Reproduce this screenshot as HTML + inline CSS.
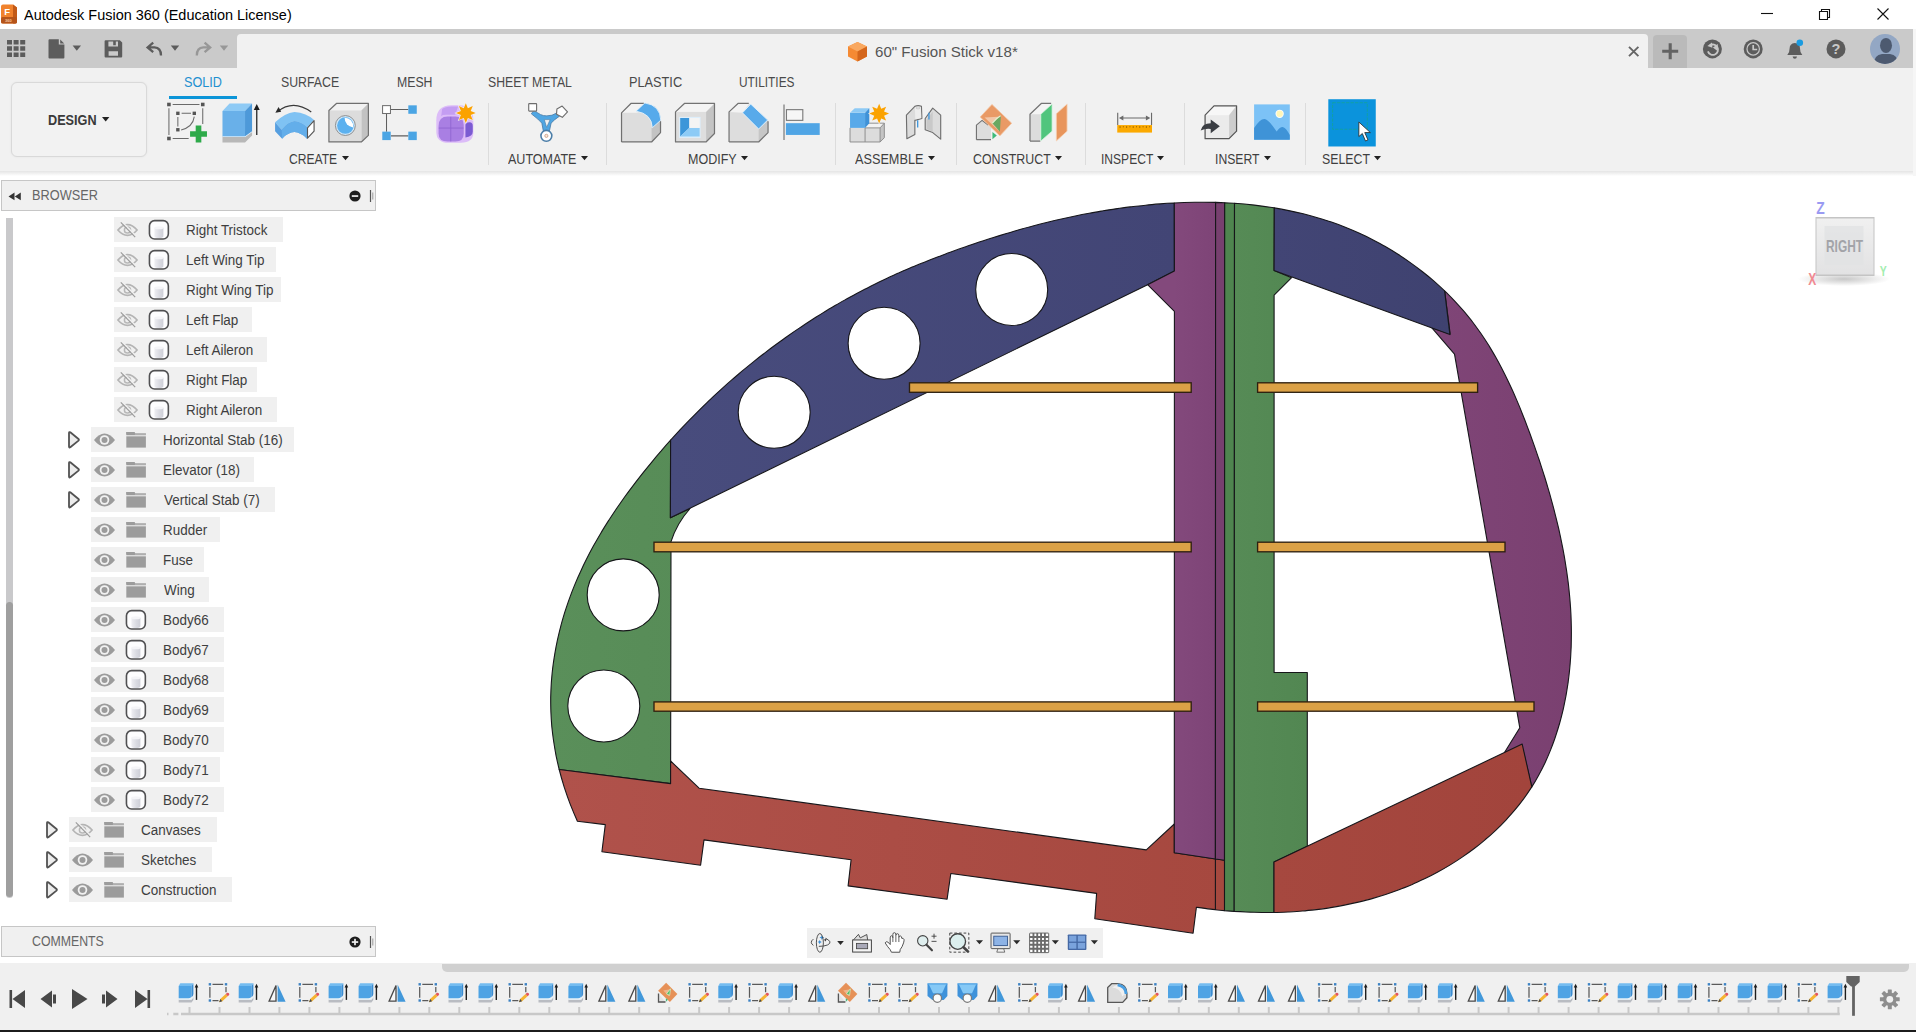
<!DOCTYPE html>
<html lang="en"><head><meta charset="utf-8"><title>Autodesk Fusion 360</title>
<style>
html,body{margin:0;padding:0}
body{width:1916px;height:1032px;position:relative;overflow:hidden;background:#fff;font-family:"Liberation Sans",sans-serif;color:#3c3c3c;font-size:12px}
.abs{position:absolute}
svg{display:block;overflow:visible}
#titlebar{position:absolute;left:0;top:0;width:1916px;height:29px;background:#fff}
#titlebar .t{position:absolute;left:23px;top:5px;font-size:15px;line-height:18px;color:#000;white-space:nowrap;transform-origin:0 50%}
#tabbar{position:absolute;left:0;top:29px;width:1916px;height:39.500px;background:#cacaca}
#doctab{position:absolute;left:237px;top:5px;width:1410.500px;height:35px;background:#f1f1f1;border-radius:4px 4px 0 0}
#toolbar{position:absolute;left:0;top:68px;width:1916px;height:103px;background:#f1f1f1}
#tbshadow{position:absolute;left:0;top:171px;width:1916px;height:5px;background:linear-gradient(#e4e4e4,#f4f4f4 60%,#fff)}
.tab{position:absolute;top:7px;font-size:12px;line-height:14px;color:#4a4a4a;white-space:nowrap}
.grp{position:absolute;top:84px;font-size:12px;line-height:14px;color:#3c3c3c;white-space:nowrap}
.grp:after{content:"";display:inline-block;margin-left:3px;border:3.5px solid transparent;border-top:4.5px solid #222;border-bottom:0;vertical-align:3px}
.sep{position:absolute;top:35px;width:1px;height:62px;background:#dcdcdc}
.ico{position:absolute}
#browserhdr,#comments{position:absolute;left:1px;width:373px;height:29px;background:#f0f0f0;border:1px solid #c6c6c6;box-sizing:content-box}
.hdrt{position:absolute;left:31px;top:8px;font-size:12.5px;line-height:14px;color:#5a5a5a}
.row{position:absolute;height:25px;background:#f0f0f0;white-space:nowrap}
.row .lbl{position:absolute;top:4px;font-size:13.5px;line-height:16px;color:#333}
.lb{position:absolute;white-space:nowrap;transform-origin:0 0}

</style></head>
<body>
<svg width="0" height="0" style="position:absolute"><defs>
<symbol id="iExp" overflow="visible"><path d="M2.300 2.200Q2.300 0.800 3.600 1.500L11.800 8.200Q12.600 9 11.800 9.800L3.600 16.500Q2.300 17.200 2.300 15.800Z" fill="#ececec" stroke="#525252" stroke-width="1.800" stroke-linejoin="round"/></symbol>
<symbol id="iEye" overflow="visible"><path d="M0.500 8Q5.500 1.500 11 1.500T21.500 8Q16.500 14.500 11 14.500T0.500 8Z" fill="#9b9b9b"/><circle cx="11" cy="8" r="4.800" fill="#f1f1f1"/><circle cx="11" cy="8" r="3" fill="#9b9b9b"/></symbol>
<symbol id="iEyeOff" overflow="visible"><path d="M1.400 8Q6 2.600 11 2.600T20.600 8Q16 13.400 11 13.400T1.400 8Z" fill="none" stroke="#b4b4b4" stroke-width="1.600"/><circle cx="11" cy="8" r="3.100" fill="none" stroke="#b8b8b8" stroke-width="1.500"/><path d="M5.500 -0.200L19.900 14.500" stroke="#f0f0f0" stroke-width="1.500" fill="none"/><path d="M4.300 0.400L18.700 15.100" stroke="#9c9c9c" stroke-width="1.200" fill="none"/></symbol>
<symbol id="iFolder" overflow="visible"><path d="M0.200 0H8.200L9.200 1.300H19.800V3.300H0.200Z" fill="#9c9c9c"/><path d="M0.200 0H8.400V2.300H0.200Z" fill="#9c9c9c"/><path d="M0.200 4.300H19.800V15.600H0.200Z" fill="#9c9c9c"/><path d="M8.800 2.100H19.800" stroke="#c4c4c4" stroke-width="0.800"/></symbol>
<symbol id="iBody" overflow="visible"><rect x="0.850" y="0.850" width="18.900" height="18.400" rx="5.200" fill="#fdfdfe" stroke="#505052" stroke-width="1.600"/><path d="M5.800 8v8.400q0 1.800 4.500 1.800t4.500-1.800V8z" fill="url(#gCyl)"/><ellipse cx="10.300" cy="8" rx="4.500" ry="1.500" fill="#f4f4f7"/></symbol>
<linearGradient id="gCyl" x1="0" x2="1"><stop offset="0" stop-color="#eeeef2"/><stop offset="0.600" stop-color="#d8d9e0"/><stop offset="1" stop-color="#cfd0d8"/></linearGradient>
<symbol id="iGear" overflow="visible"><g transform="translate(10,10)" fill="#8e8e8e"><circle r="6.800"/><g id="gt"><rect x="-2" y="-9.900" width="4" height="5" rx="0.500"/><rect x="-2" y="4.900" width="4" height="5" rx="0.500"/></g><use href="#gt" transform="rotate(45)"/><use href="#gt" transform="rotate(90)"/><use href="#gt" transform="rotate(135)"/><circle r="3.400" fill="#f0f0f0"/></g></symbol>
<!-- timeline icons 22x22 -->
<symbol id="tE" overflow="visible"><path d="M1.700 16.600H14.500L16.400 14.300V17L14.500 19.400H1.700Z" fill="#b9bcc2"/><path d="M1.700 15.200H14.500L16.400 12.800V14.500L14.500 16.800H1.700Z" fill="#e6f3fc"/><path d="M1.700 3.100L3.300 0.300H16.400L14.500 3.100Z" fill="#74bcf0"/><path d="M1.700 3.100H14.500V12.500Q14.500 15.200 11.500 15.200H1.700Z" fill="#4ea3e4"/><path d="M14.500 3.100L16.400 0.300V11Q16.400 13 14.500 14.200Z" fill="#3b8dd2"/><path d="M19.500 16.900V3" stroke="#1e1e1e" stroke-width="1.400" fill="none"/><path d="M19.500 0.800L21.300 4.600H17.700Z" fill="#1e1e1e"/></symbol>
<symbol id="tS" overflow="visible"><path d="M5.500 1.300H16.200M2.900 4V14.800M19 4V9.300M5.500 17.500H11.500" fill="none" stroke="#5a5a5a" stroke-width="1.250"/><g fill="#3b82c4"><rect x="1.700" y="0.100" width="2.400" height="2.400"/><rect x="17.800" y="0.100" width="2.400" height="2.400"/><rect x="1.700" y="16.300" width="2.400" height="2.400"/></g><path d="M12.200 19.300L13.300 16.100L18.700 11.100L20.700 13.200L15.300 18.300Z" fill="#f6b432"/><path d="M18.700 11.100L19.900 10Q21 9.300 21.900 10.300Q22.800 11.300 21.900 12.200L20.700 13.200Z" fill="#e2545e"/><path d="M12.200 19.300L13.300 16.100L15.300 18.300Z" fill="#4a4a4a"/></symbol>
<symbol id="tM" overflow="visible"><path d="M9.100 2.600V18.200H2.200Z" fill="#f8f8f8" stroke="#484848" stroke-width="1.300" stroke-linejoin="miter"/><path d="M10.700 1.600L18.700 18.800H10.700Z" fill="#4298da"/></symbol>
<symbol id="tP" overflow="visible"><path d="M1.800 10.500V19H8.800" fill="#e2e2e2" stroke="#555" stroke-width="1.300"/><path d="M9.400 -0.300L20.700 11L13.200 19L1.400 7.700Z" fill="#e58a4c" fill-opacity="0.930"/><path d="M6.500 7.500L13.500 6.200L12.500 13.500Z" fill="#f0b48c"/><path d="M9.800 10.800L13.800 5.800L13 12.300Z" fill="#58b86a" stroke="#d8f2c8" stroke-width="0.700"/><path d="M9.200 15.200L11.200 16.800L9.200 18.800Z" fill="#3dba7a"/></symbol>
<symbol id="tH" overflow="visible"><path d="M1 0.400H20.900V12.900L17.200 17.100H5.900L1 12.900Z" fill="#3f92da"/><path d="M2.200 1.100H19.800L15.500 10.300H6.600Z" fill="#86c9f6"/><path d="M1 0.400H20.900V1.600H1Z" fill="#58a8e6"/><circle cx="10.800" cy="15.200" r="4.200" fill="#fbfbfb" stroke="#7a7a7a" stroke-width="1.200"/></symbol>
<symbol id="tF" overflow="visible"><path d="M1.300 19.400V4.400L5.500 0.600H11.600Q20.500 1.500 20.500 10.500V14.700L16.300 19.400Z" fill="#dcdcdc" stroke="#585858" stroke-width="1.300" stroke-linejoin="round"/><path d="M5.600 4.600Q14 5 15.800 13.500L20 10Q19.500 1.600 11.600 1.200Z" fill="#f0f0f0"/><path d="M11.200 1.900Q19.300 3.200 19.600 11" fill="none" stroke="#4a9fe2" stroke-width="2.700"/></symbol>
</defs></svg>

<svg id="model" width="1916" height="1032" viewBox="0 0 1916 1032" style="position:absolute;left:0;top:0"><defs>
<linearGradient id="gGreenL" x1="0" x2="1" y1="0" y2="0"><stop offset="0" stop-color="#5a8f5a"/><stop offset="1" stop-color="#578c57"/></linearGradient>
<linearGradient id="gRedL" gradientUnits="userSpaceOnUse" x1="560" x2="1225" y1="0" y2="0"><stop offset="0" stop-color="#b0524b"/><stop offset="1" stop-color="#a6483f"/></linearGradient>
<linearGradient id="gRedR" gradientUnits="userSpaceOnUse" x1="1274" x2="1530" y1="0" y2="0"><stop offset="0" stop-color="#a6483f"/><stop offset="1" stop-color="#a2443c"/></linearGradient>
<linearGradient id="gBlueL" gradientUnits="userSpaceOnUse" x1="670" x2="1175" y1="0" y2="0"><stop offset="0" stop-color="#484c7d"/><stop offset="1" stop-color="#424575"/></linearGradient>
<linearGradient id="gBlueR" gradientUnits="userSpaceOnUse" x1="1274" x2="1450" y1="0" y2="0"><stop offset="0" stop-color="#424575"/><stop offset="1" stop-color="#3f4270"/></linearGradient>
<linearGradient id="gPurC" gradientUnits="userSpaceOnUse" x1="1174" x2="1215" y1="0" y2="0"><stop offset="0" stop-color="#83497c"/><stop offset="1" stop-color="#7e4477"/></linearGradient>
<linearGradient id="gPurR" gradientUnits="userSpaceOnUse" x1="1440" x2="1572" y1="0" y2="0"><stop offset="0" stop-color="#7f4577"/><stop offset="1" stop-color="#7a4070"/></linearGradient>
<linearGradient id="gGreenC" gradientUnits="userSpaceOnUse" x1="1234" x2="1307" y1="0" y2="0"><stop offset="0" stop-color="#568b56"/><stop offset="1" stop-color="#528752"/></linearGradient>
</defs>
<path d="M559.2 769.5C558.0 764.8 557.0 760.0 556.0 755.3C555.1 750.5 554.3 745.7 553.6 741.0C552.9 736.2 552.3 731.4 551.8 726.5C551.4 721.7 551.1 716.9 550.9 712.1C550.7 707.3 550.7 702.4 550.7 697.6C550.8 692.8 551.0 688.0 551.3 683.2C551.6 678.3 552.1 673.5 552.6 668.7C553.2 664.0 553.9 659.2 554.7 654.4C555.5 649.6 556.4 644.9 557.4 640.2C558.4 635.5 559.6 630.8 560.8 626.1C562.0 621.4 563.4 616.8 564.8 612.2C566.3 607.6 567.8 603.0 569.5 598.4C571.1 593.9 572.8 589.4 574.7 584.9C576.5 580.5 578.4 576.0 580.5 571.7C582.5 567.3 584.6 562.9 586.8 558.6C588.9 554.3 591.2 550.0 593.5 545.8C595.9 541.6 598.3 537.4 600.8 533.2C603.2 529.1 605.8 525.0 608.4 520.9C611.0 516.8 613.7 512.8 616.4 508.7C619.2 504.7 622.0 500.8 624.8 496.8C627.6 492.9 630.5 489.0 633.5 485.1C636.4 481.2 639.4 477.4 642.4 473.6C645.4 469.8 648.5 466.0 651.6 462.3C654.7 458.5 657.8 454.8 661.0 451.2C664.1 447.5 667.3 443.8 670.6 440.2L670.4 517.8L690.1 508.5Q677.0 523.0 671.0 541.7L670.6 783.6ZM587.2 594.9 a36.0 36.0 0 1 0 72.0 0a36.0 36.0 0 1 0 -72.0 0zM567.8 706.0 a36.0 36.0 0 1 0 72.0 0a36.0 36.0 0 1 0 -72.0 0z" fill="url(#gGreenL)" stroke="#16161a" stroke-width="1.1" stroke-linejoin="round" fill-rule="evenodd" />
<path d="M559.2 769.5L670.6 783.6L670.6 761.0L699.1 788.2L1146.3 849.9L1174.3 824.0L1174.3 852.8L1224.4 860.3L1224.5 910.6C1219.8 910.2 1215.1 909.7 1210.4 909.1C1205.7 908.6 1201.1 907.9 1196.4 907.2L1193.1 933.2L1094.8 918.8L1096.6 893.4L950.8 873.5L947.1 899.2L848.1 885.9L851.1 859.8L704.0 839.9L700.6 865.3L601.9 851.7L605.3 824.6L577.4 821.2C574.9 815.7 572.5 810.0 570.3 804.4C568.1 798.7 566.1 792.9 564.2 787.1C562.4 781.3 560.7 775.4 559.2 769.5Z" fill="url(#gRedL)" stroke="#16161a" stroke-width="1.1" stroke-linejoin="round" fill-rule="evenodd" />
<path d="M670.6 440.2C673.8 436.7 677.0 433.2 680.2 429.7C683.5 426.2 686.8 422.8 690.1 419.4C693.4 416.0 696.8 412.6 700.1 409.3C703.5 405.9 707.0 402.6 710.4 399.3C713.9 396.1 717.3 392.8 720.9 389.6C724.4 386.4 727.9 383.3 731.5 380.2C735.1 377.0 738.7 374.0 742.3 370.9C746.0 367.9 749.7 364.9 753.4 361.9C757.1 358.9 760.8 356.0 764.6 353.1C768.3 350.2 772.1 347.3 776.0 344.5C779.8 341.7 783.6 338.9 787.5 336.2C791.4 333.4 795.3 330.7 799.3 328.1C803.2 325.4 807.2 322.8 811.2 320.2C815.2 317.7 819.2 315.1 823.3 312.6C827.3 310.2 831.4 307.7 835.5 305.3C839.6 302.9 843.8 300.6 847.9 298.3C852.1 295.9 856.3 293.7 860.5 291.5C864.7 289.2 868.9 287.1 873.2 284.9C877.5 282.8 881.8 280.8 886.1 278.7C890.4 276.7 894.7 274.7 899.1 272.8C903.4 270.8 907.8 269.0 912.2 267.1C916.6 265.3 921.0 263.4 925.5 261.7C929.9 259.9 934.3 258.2 938.8 256.5C943.3 254.8 947.7 253.1 952.2 251.5C956.7 249.9 961.2 248.3 965.7 246.7C970.2 245.1 974.7 243.6 979.2 242.1C983.7 240.6 988.2 239.1 992.7 237.7C997.3 236.3 1001.8 234.9 1006.4 233.5C1010.9 232.1 1015.5 230.8 1020.0 229.5C1024.6 228.2 1029.2 227.0 1033.8 225.8C1038.3 224.6 1042.9 223.4 1047.5 222.3C1052.1 221.1 1056.7 220.0 1061.4 219.0C1066.0 218.0 1070.6 217.0 1075.3 216.0C1079.9 215.0 1084.6 214.1 1089.2 213.3C1093.9 212.4 1098.6 211.6 1103.2 210.8C1107.9 210.0 1112.6 209.3 1117.3 208.6C1122.0 207.9 1126.8 207.3 1131.5 206.7C1136.2 206.2 1141.0 205.6 1145.7 205.2C1150.5 204.7 1155.2 204.3 1160.0 203.9C1164.8 203.5 1169.5 203.2 1174.3 203.0L1174.4 270.9L1147.6 284.7L670.4 517.8ZM738.2 412.3 a36.0 36.0 0 1 0 72.0 0a36.0 36.0 0 1 0 -72.0 0zM848.1 343.3 a36.0 36.0 0 1 0 72.0 0a36.0 36.0 0 1 0 -72.0 0zM975.7 289.5 a36.0 36.0 0 1 0 72.0 0a36.0 36.0 0 1 0 -72.0 0z" fill="url(#gBlueL)" stroke="#16161a" stroke-width="1.1" stroke-linejoin="round" fill-rule="evenodd" />
<path d="M1174.3 203.0C1181.2 202.6 1188.1 202.4 1195.0 202.3C1201.8 202.2 1208.7 202.2 1215.6 202.4L1215.4 859.0L1174.3 852.8L1174.4 311.3L1147.6 284.7L1174.4 270.9Z" fill="url(#gPurC)" stroke="#16161a" stroke-width="1.1" stroke-linejoin="round" fill-rule="evenodd" />
<path d="M1215.6 202.4C1218.6 202.5 1221.7 202.6 1224.7 202.8L1224.5 860.3L1215.4 859.0Z" fill="#77406f" stroke="#16161a" stroke-width="1.1" stroke-linejoin="round" fill-rule="evenodd" />
<path d="M1215.4 859L1215.4 909.3" stroke="#16161a" stroke-width="1.1" fill="none"/>
<path d="M1216 860L1223.9 861.2L1223.9 910L1216 909.2z" fill="#a5493f"/>
<path d="M1224.7 202.8C1228.0 202.9 1231.2 203.1 1234.5 203.3L1234.2 911.4C1230.9 911.2 1227.7 910.9 1224.5 910.6Z" fill="#4f854f" stroke="#16161a" stroke-width="1.1" stroke-linejoin="round" fill-rule="evenodd" />
<path d="M1234.5 203.3C1241.2 203.8 1247.8 204.4 1254.5 205.1C1261.1 205.9 1267.7 206.8 1274.3 207.9L1274.1 270.4L1291.6 277.7L1274.1 295.2L1274.1 672.5L1307.3 672.5L1307.3 846.2L1274.0 862.0L1274.0 912.5C1267.3 912.6 1260.7 912.5 1254.1 912.3C1247.4 912.2 1240.8 911.8 1234.2 911.4Z" fill="url(#gGreenC)" stroke="#16161a" stroke-width="1.1" stroke-linejoin="round" fill-rule="evenodd" />
<path d="M1444.6 290.9C1448.0 294.1 1451.3 297.5 1454.5 300.8C1457.7 304.2 1460.8 307.7 1463.8 311.2C1466.8 314.8 1469.8 318.4 1472.6 322.0C1475.4 325.7 1478.1 329.5 1480.8 333.3C1483.4 337.1 1485.9 340.9 1488.4 344.8C1490.8 348.8 1493.2 352.7 1495.5 356.8C1497.8 360.8 1500.0 364.9 1502.1 369.0C1504.2 373.1 1506.3 377.3 1508.3 381.5C1510.3 385.7 1512.3 389.9 1514.2 394.2C1516.0 398.5 1517.9 402.8 1519.7 407.1C1521.4 411.5 1523.2 415.9 1524.9 420.3C1526.6 424.7 1528.2 429.1 1529.9 433.5C1531.5 437.9 1533.1 442.4 1534.7 446.9C1536.2 451.3 1537.8 455.8 1539.3 460.3C1540.8 464.8 1542.2 469.3 1543.7 473.8C1545.1 478.4 1546.5 482.9 1547.8 487.4C1549.2 492.0 1550.5 496.5 1551.7 501.1C1553.0 505.7 1554.2 510.3 1555.3 514.8C1556.5 519.4 1557.6 524.0 1558.7 528.6C1559.7 533.2 1560.7 537.8 1561.6 542.4C1562.6 547.1 1563.5 551.7 1564.3 556.3C1565.1 560.9 1565.8 565.6 1566.5 570.2C1567.2 574.8 1567.8 579.5 1568.4 584.1C1568.9 588.8 1569.4 593.4 1569.8 598.1C1570.2 602.7 1570.6 607.4 1570.8 612.0C1571.1 616.7 1571.2 621.3 1571.3 626.0C1571.4 630.7 1571.4 635.3 1571.3 640.0C1571.3 644.6 1571.1 649.3 1570.8 653.9C1570.6 658.6 1570.2 663.2 1569.8 667.8C1569.4 672.5 1568.8 677.1 1568.2 681.8C1567.5 686.4 1566.8 691.0 1566.0 695.6C1565.1 700.2 1564.2 704.8 1563.2 709.4C1562.1 714.0 1561.0 718.5 1559.7 723.0C1558.4 727.5 1557.0 732.0 1555.5 736.5C1554.1 740.9 1552.4 745.3 1550.7 749.6C1549.0 754.0 1547.1 758.2 1545.2 762.5C1543.2 766.7 1541.1 770.8 1538.8 774.9C1536.6 779.0 1534.3 783.0 1531.8 786.9L1523.0 750.0L1504.5 752.5L1519.8 727.8L1454.5 354.1L1431.9 327.8L1450.2 334.0Z" fill="url(#gPurR)" stroke="#16161a" stroke-width="1.1" stroke-linejoin="round" fill-rule="evenodd" />
<path d="M1274.3 207.9C1279.2 208.7 1284.0 209.6 1288.8 210.6C1293.6 211.5 1298.4 212.6 1303.2 213.8C1307.9 215.0 1312.7 216.3 1317.4 217.7C1322.1 219.1 1326.8 220.5 1331.4 222.1C1336.1 223.7 1340.7 225.4 1345.3 227.3C1349.8 229.1 1354.4 231.0 1358.9 233.1C1363.4 235.1 1367.8 237.2 1372.2 239.5C1376.6 241.8 1381.0 244.1 1385.3 246.6C1389.6 249.1 1393.8 251.6 1398.0 254.3C1402.2 257.0 1406.3 259.7 1410.3 262.6C1414.4 265.5 1418.3 268.4 1422.2 271.5C1426.1 274.5 1430.0 277.7 1433.7 280.9C1437.4 284.2 1441.1 287.5 1444.6 290.9L1449.9 334.6L1274.1 270.4Z" fill="url(#gBlueR)" stroke="#16161a" stroke-width="1.1" stroke-linejoin="round" fill-rule="evenodd" />
<path d="M1274.0 862.0L1522.2 744.1L1531.8 786.9C1529.2 790.9 1526.6 794.8 1523.8 798.6C1521.0 802.4 1518.1 806.1 1515.1 809.7C1512.1 813.3 1508.9 816.8 1505.7 820.3C1502.5 823.7 1499.1 827.1 1495.7 830.3C1492.2 833.6 1488.7 836.8 1485.0 839.8C1481.4 842.9 1477.7 845.9 1473.9 848.8C1470.1 851.7 1466.2 854.4 1462.2 857.1C1458.3 859.8 1454.3 862.4 1450.2 864.9C1446.1 867.4 1442.0 869.8 1437.8 872.0C1433.6 874.3 1429.4 876.5 1425.1 878.6C1420.8 880.6 1416.5 882.6 1412.2 884.5C1407.8 886.3 1403.4 888.1 1399.0 889.8C1394.6 891.4 1390.1 893.0 1385.6 894.5C1381.2 895.9 1376.6 897.3 1372.1 898.6C1367.6 899.9 1363.0 901.0 1358.4 902.1C1353.8 903.2 1349.2 904.2 1344.5 905.1C1339.9 906.1 1335.2 906.9 1330.6 907.6C1325.9 908.4 1321.2 909.0 1316.5 909.6C1311.8 910.1 1307.1 910.6 1302.4 911.0C1297.7 911.4 1292.9 911.7 1288.2 912.0C1283.5 912.2 1278.7 912.4 1274.0 912.5Z" fill="url(#gRedR)" stroke="#16161a" stroke-width="1.1" stroke-linejoin="round" fill-rule="evenodd" />
<rect x="909.5" y="382.8" width="281.7" height="9.5" fill="#dba146" stroke="#2e2010" stroke-width="1.35"/>
<rect x="654.0" y="542.2" width="537.2" height="9.6" fill="#dba146" stroke="#2e2010" stroke-width="1.35"/>
<rect x="654.0" y="701.9" width="537.2" height="9.3" fill="#dba146" stroke="#2e2010" stroke-width="1.35"/>
<rect x="1257.6" y="382.8" width="220.0" height="9.5" fill="#dba146" stroke="#2e2010" stroke-width="1.35"/>
<rect x="1257.6" y="542.2" width="247.4" height="9.6" fill="#dba146" stroke="#2e2010" stroke-width="1.35"/>
<rect x="1257.6" y="701.9" width="276.4" height="9.3" fill="#dba146" stroke="#2e2010" stroke-width="1.35"/></svg>
<div id="titlebar">
<svg class="abs" style="left:0.800px;top:4px" width="16" height="20" viewBox="0 0 16 20"><path d="M0 2.5Q0 0.5 2 0.5H12L16 3.5V17.5Q16 19.5 14 19.5H2Q0 19.5 0 17.5Z" fill="#f0822d"/><path d="M12 0.5L16 3.5V17.5Q16 19.5 14 19.5H12Z" fill="#c25a18"/><rect x="0" y="13" width="16" height="6.5" rx="1.5" fill="#b5541a"/><text x="3.3" y="10.5" font-family="Liberation Sans,sans-serif" font-weight="bold" font-size="9.5" fill="#fff">F</text><text x="4" y="18" font-family="Liberation Sans,sans-serif" font-weight="bold" font-size="4" fill="#f7c9a0">360</text></svg>
<!--TITLE-->
<svg class="abs" style="left:1740px;top:0" width="176" height="29" viewBox="0 0 176 29"><g stroke="#111" stroke-width="1.1" fill="none"><path d="M21 13.5H33"/><path d="M79.5 11.5h8v8h-8zM81.5 11.5v-2h8v8h-2"/><path d="M137.5 8.5l11 11M148.5 8.5l-11 11"/></g></svg>
</div>
<div id="tabbar">
<div id="doctab"></div>
<div class="abs" style="left:1652.800px;top:5.500px;width:34px;height:34px;background:#bababa;border-radius:4px 4px 0 0"></div>
<svg class="abs" style="left:0;top:0" width="1916" height="39" viewBox="0 29 1916 39">
<g fill="#5c5c5c">
<path d="M7 40h5v4.6h-5zM13.6 40h5v4.6h-5zM20.2 40h5v4.6h-5zM7 46.2h5v4.6h-5zM13.6 46.2h5v4.6h-5zM20.2 46.2h5v4.6h-5zM7 52.4h5v4.6h-5zM13.6 52.4h5v4.6h-5zM20.2 52.4h5v4.6h-5z"/>
<path d="M48.5 40.2q0-1 1-1h9.3v5.4h5.6v13q0 1-1 1h-13.9q-1 0-1-1zM60.2 39.4l4 4h-4z"/>
<path d="M72.6 45.6h8.4l-4.2 5.2z"/>
<path d="M104.6 41.2q0-1 1-1h14.2l2.4 2.4v13.8q0 1-1 1h-15.6q-1 0-1-1zM108.4 41.6v5h9.6v-5h-2.2v3.6h-2.6v-3.6zM108.6 55.8h9.4v-4.6h-9.4z" fill-rule="evenodd"/>
<path d="M170.8 45.6h8.4l-4.2 5.2z"/>
</g>
<path d="M153.2 42.6l-5.6 4.8 5.6 4.8M148 47.4h6.5q6.5 0.4 6.5 8" fill="none" stroke="#5c5c5c" stroke-width="2.3"/>
<path d="M204.6 42.6l5.6 4.8-5.6 4.8M209.8 47.4h-6.5q-6.5 0.4-6.5 8" fill="none" stroke="#979797" stroke-width="2.3"/>
<path d="M219.8 45.6h8.4l-4.2 5.2z" fill="#979797"/>
<!-- doc icon cube -->
<g transform="translate(848,42)"><path d="M9.5 0L19 4.5V14.5L9.5 19.5L0 14.5V4.5Z" fill="#f58a33"/><path d="M9.5 0L19 4.5L9.5 9.5L0 4.5Z" fill="#f9a860"/><path d="M9.5 9.5L19 4.5V14.5L9.5 19.5Z" fill="#d4661c"/></g>
<path d="M1629 46.800l9.400 9.400M1638.400 46.800l-9.400 9.400" stroke="#666" stroke-width="1.900" fill="none"/>
<path d="M1670.200 43.200v16M1662.200 51.200h16" stroke="#636363" stroke-width="3.100" fill="none"/>
<!-- ext -->
<g transform="translate(1712.400,48.900)"><circle r="9.5" fill="#5c5c5c"/><path d="M-4.5 2.5a5.2 5.2 0 1 0 2-6" fill="none" stroke="#c8c8c8" stroke-width="1.8"/><path d="M-0.5 -6.5l-4.5 3.5 5 1.8z" fill="#c8c8c8"/><path d="M0.5 -1.5l5-3.5-0.5 7z" fill="#c8c8c8"/></g>
<!-- clock -->
<g transform="translate(1753.200,48.900)"><circle r="9.5" fill="#5c5c5c"/><circle r="6.8" fill="#c8c8c8"/><circle r="5.6" fill="#5c5c5c"/><path d="M0 -3.8V0.6H4" fill="none" stroke="#c8c8c8" stroke-width="1.7"/></g>
<!-- bell -->
<g transform="translate(1794.800,49.600)"><path d="M-7.5 5.5q2.3-2 2.3-6.5q0-5 5.2-5.6q5.2 0.6 5.2 5.6q0 4.500 2.3 6.5z" fill="#5c5c5c"/><path d="M-2.2 7h4.4q-0.4 2.200-2.200 2.200t-2.200-2.200z" fill="#5c5c5c"/><circle cx="5" cy="-6.800" r="3.300" fill="#1a9be0"/></g>
<!-- help -->
<g transform="translate(1836,48.900)"><circle r="9.5" fill="#5c5c5c"/><text x="0" y="5.200" text-anchor="middle" font-family="Liberation Sans,sans-serif" font-weight="bold" font-size="14.500" fill="#c8c8c8">?</text></g>
<!-- avatar -->
<g transform="translate(1885,48.900)"><clipPath id="avc"><circle r="15"/></clipPath><circle r="15" fill="#93a7c4"/><g clip-path="url(#avc)"><ellipse cx="1" cy="-3.5" rx="6" ry="7.5" fill="#4d5a70"/><path d="M-11 15q0-9 8-10h8q8 1 8 10z" fill="#4d5a70"/></g></g>
</svg>
<!--DOCTITLE-->
</div>
<div id="toolbar">
<div class="abs" style="left:169px;top:28px;width:68px;height:3px;background:#0c95d8"></div>
<div class="abs" style="left:11.300px;top:14.300px;width:133.300px;height:73.200px;border:1px solid #d9d9d9;border-radius:6px;background:#f2f2f2;box-shadow:0 0 2px #e2e2e2"></div>
<div class="sep" style="left:488px"></div><div class="sep" style="left:606px"></div><div class="sep" style="left:835px"></div><div class="sep" style="left:956px"></div><div class="sep" style="left:1085px"></div><div class="sep" style="left:1184px"></div><div class="sep" style="left:1305px"></div>
<!--TBLABELS-->
<svg class="abs" style="left:0;top:0" width="1916" height="108" viewBox="0 68 1916 108">
<defs>
<path id="star8" d="M0 -105L22 -52L74 -74L52 -22L105 0L52 22L74 74L22 52L0 105L-22 52L-74 74L-52 22L-105 0L-52 -22L-74 -74L-22 -52Z"/>
</defs>
<!-- Z1 origin 160,95 -->
<g transform="translate(160,95) scale(0.09395)">
 <!-- sketch -->
 <g fill="none" stroke="#6a6a6a" stroke-width="11"><path d="M135 100H420M95 140V425M455 140V310M135 462H305"/><path d="M230 195H330M190 235V335"/><path d="M365 230Q350 340 225 372"/></g>
 <g fill="#555"><rect x="76" y="82" width="38" height="38"/><rect x="436" y="82" width="38" height="38"/><rect x="76" y="444" width="38" height="38"/><rect x="172" y="177" width="36" height="36"/><rect x="347" y="177" width="36" height="36"/><rect x="172" y="352" width="36" height="36"/></g>
 <path d="M380 325h60v60h60v60h-60v60h-60v-60h-60v-60h60z" fill="#2eaa4a"/>
 <!-- extrude -->
 <path d="M665 440H905L980 385V430L905 505H665Z" fill="#b8b8b8"/>
 <path d="M665 440H905L980 385" fill="none" stroke="#e8f4fc" stroke-width="16"/>
 <path d="M665 170H905V440H665Z" fill="#69b0e9"/>
 <path d="M665 170L740 90H980L905 170Z" fill="#8ecaf5"/>
 <path d="M905 170L980 90V385L905 440Z" fill="#4d99d9"/>
 <path d="M1030 425V130" stroke="#1c1c1c" stroke-width="13" fill="none"/><path d="M1030 95L1062 160H998Z" fill="#1c1c1c"/>
 <!-- revolve -->
 <path d="M1250 178Q1420 42 1610 182" fill="none" stroke="#3a3a3a" stroke-width="13"/><path d="M1228 188L1262 128L1290 178Z" fill="#2a2a2a"/>
 <path d="M1225 290Q1330 190 1430 180Q1560 190 1640 265L1565 345Q1500 285 1430 280Q1360 290 1295 370Z" fill="#7fc2f3"/>
 <path d="M1225 290L1295 370Q1360 290 1430 280Q1500 285 1565 345V465Q1500 400 1430 395Q1360 400 1300 465L1225 385Z" fill="#569fe0"/>
 <path d="M1295 370Q1360 290 1430 280Q1500 285 1565 345V465Q1500 400 1430 395Q1360 400 1300 465Z" fill="#63aeea"/>
 <path d="M1570 350L1640 272V385L1570 460Z" fill="#fff" stroke="#555" stroke-width="12" stroke-linejoin="round"/>
</g>
<!-- Z2 origin 320,95 -->
<g transform="translate(320,95) scale(0.09395)">
 <!-- hole -->
 <path d="M95 165L175 90H515L440 165Z" fill="#f2f2f2"/><path d="M440 165L515 90V430L440 500Z" fill="#c2c2c2"/><path d="M95 165H440V500H95Z" fill="#dcdcdc"/>
 <path d="M95 165L175 90H515V430L440 500H95Z" fill="none" stroke="#707070" stroke-width="13" stroke-linejoin="round"/>
 <circle cx="270" cy="325" r="106" fill="#cfe6f7" stroke="#8a8a8a" stroke-width="10"/><circle cx="270" cy="325" r="88" fill="#5cb1ef"/><path d="M262 243A88 88 0 0 1 352 345A100 100 0 0 1 262 243Z" fill="#fff"/>
 <!-- pattern -->
 <g fill="none" stroke="#5f5f5f" stroke-width="11"><path d="M755 155H940M708 200V390M755 435H940"/></g>
 <rect x="666" y="113" width="84" height="84" fill="#fff" stroke="#707070" stroke-width="11"/>
 <g fill="#4ba5e4"><rect x="940" y="110" width="90" height="90"/><rect x="663" y="390" width="90" height="90"/><rect x="940" y="390" width="90" height="90"/></g>
 <!-- form -->
 <path d="M1238 270Q1238 108 1400 108H1480Q1632 108 1632 270V400Q1632 508 1500 508H1370Q1238 508 1238 390Z" fill="#dcbcf8"/>
 <path d="M1262 330Q1262 228 1360 228H1440Q1530 228 1530 320V410Q1530 496 1440 496H1360Q1262 496 1262 410Z" fill="#a97fe3"/>
 <path d="M1548 300Q1626 270 1626 330V390Q1626 440 1548 452Z" fill="#7b5bd2"/>
 <path d="M1300 150Q1330 125 1400 122H1470L1440 210H1340Q1300 210 1290 225Z" fill="#c49df2"/>
 <path d="M1392 232V494M1264 352H1528" stroke="#8d64cf" stroke-width="9" fill="none"/>
 <g transform="translate(1552,192)"><use href="#star8" fill="#f4f0ec" transform="scale(1.16)"/><use href="#star8" fill="#fba200"/></g>
</g>
<!-- Z3 origin 490,95 -->
<g transform="translate(490,95) scale(0.09395)">
 <!-- automate -->
 <path d="M470 160Q540 225 600 222Q660 225 715 190L740 225Q680 265 650 300L632 385H568L552 300Q520 260 440 200Z" fill="#4fa6e3" stroke="#4c7ea8" stroke-width="9" stroke-linejoin="round"/>
 <path d="M578 262H640L603 345Z" fill="#f1f1f1" stroke="#4c7ea8" stroke-width="7" stroke-linejoin="round"/>
 <rect x="412" y="92" width="84" height="80" rx="6" fill="#fff" stroke="#6e6e6e" stroke-width="12"/>
 <path d="M768 118L825 180L770 238L708 205L712 150Z" fill="#fff" stroke="#6e6e6e" stroke-width="12" stroke-linejoin="round"/>
 <circle cx="600" cy="435" r="58" fill="#fff" stroke="#4c7ea8" stroke-width="17"/><circle cx="600" cy="435" r="17" fill="#f6e6dc" stroke="#c08a6a" stroke-width="7"/>
 <!-- fillet -->
 <path d="M1400 190L1500 90H1650Q1815 100 1815 265V400L1720 500H1400Z" fill="#dddddd"/>
 <path d="M1400 190L1500 90H1650L1560 172Q1600 178 1560 190Z" fill="#f3f3f3"/>
 <path d="M1720 350L1815 270V400L1720 500Z" fill="#c3c3c3"/>
 <path d="M1400 500V190L1500 90H1640M1815 280V400L1720 500H1400" fill="none" stroke="#707070" stroke-width="13" stroke-linejoin="round"/>
 <path d="M1555 172L1648 84Q1812 110 1818 268L1728 348Q1722 200 1555 172Z" fill="#56aaeb" stroke="#e4f2fc" stroke-width="9" stroke-linejoin="round"/>
</g>
<!-- Z4 origin 660,95 -->
<g transform="translate(660,95) scale(0.09395)">
 <!-- shell -->
 <path d="M165 180L260 90H580L490 180Z" fill="#f4f4f4"/><path d="M490 180L580 90V410L490 500Z" fill="#c4c4c4"/><path d="M165 180H490V500H165Z" fill="#dedede"/>
 <path d="M203 233H432V457H203Z" fill="#ddeefb"/>
 <path d="M310 245H422V350H310Z" fill="#f4f4f4"/>
 <path d="M215 245H310V350L215 442Z" fill="#3c96d9"/>
 <path d="M215 442L310 350H422V442Z" fill="#8dcbf6"/>
 <path d="M165 180L260 90H580V410L490 500H165Z" fill="none" stroke="#737373" stroke-width="13" stroke-linejoin="round"/>
 <!-- chamfer -->
 <path d="M735 180L830 90H950L1150 265V400L1050 500H735Z" fill="#dddddd"/>
 <path d="M735 180L830 90H950L880 190Z" fill="#f3f3f3"/>
 <path d="M1050 360L1150 275V400L1050 500Z" fill="#c6c6c6"/>
 <path d="M1150 280V400L1050 500H735" fill="none" stroke="#737373" stroke-width="13" stroke-linejoin="round"/>
 <path d="M735 500V180L830 90H945" fill="none" stroke="#737373" stroke-width="13" stroke-linejoin="round"/>
 <path d="M878 190L965 96L1146 266L1050 362Z" fill="#58aaea" stroke="#dff0fc" stroke-width="10" stroke-linejoin="round"/>
 <!-- align -->
 <path d="M1320 100V480" stroke="#7a7a7a" stroke-width="13" fill="none"/>
 <rect x="1346" y="156" width="174" height="114" fill="#f6f6f6" stroke="#7a7a7a" stroke-width="12"/>
 <rect x="1340" y="300" width="360" height="125" fill="#50a5e5"/>
</g>
<!-- Z5 origin 835,95 -->
<g transform="translate(835,95) scale(0.09395)">
 <!-- new component -->
 <path d="M160 350H480V500H160Z" fill="#dcdcdc"/><path d="M320 350L365 300H525L480 350Z" fill="#f2f2f2"/><path d="M480 350L525 300V455L480 500Z" fill="#c4c4c4"/>
 <path d="M160 350V500H480L525 455V300H365M320 350V500M320 350H480L525 300M480 350V500" fill="none" stroke="#8a8a8a" stroke-width="10" stroke-linejoin="round"/>
 <path d="M160 190H320V350H160Z" fill="#58a9e9"/><path d="M160 190L210 140H365L320 190Z" fill="#8ecaf5"/><path d="M320 190L365 140V300L320 350Z" fill="#3e92d8"/>
 <g transform="translate(470,198)"><use href="#star8" fill="#f4f0ec" transform="scale(1.14)"/><use href="#star8" fill="#fba200"/></g>
 <!-- joint -->
 <path d="M760 215L850 120Q885 105 920 120L925 250L850 270V420L765 465Z" fill="#dcdcdc" stroke="#6e6e6e" stroke-width="12" stroke-linejoin="round"/>
 <path d="M850 130Q885 115 915 128L918 245L855 262Z" fill="#ededed"/><ellipse cx="884" cy="138" rx="22" ry="9" fill="#fff" stroke="#999" stroke-width="5"/>
 <path d="M960 250L1040 140L1125 215V470L1040 400L960 370Z" fill="#dcdcdc" stroke="#6e6e6e" stroke-width="12" stroke-linejoin="round"/>
 <path d="M975 262L1040 175V390L975 362Z" fill="#c9c9c9"/>
 <path d="M880 270V345M1000 190V262" stroke="#3f97dc" stroke-width="14" fill="none"/>
</g>
<!-- Z6 origin 960,95 -->
<g transform="translate(960,95) scale(0.09395)">
 <!-- plane at angle -->
 <path d="M175 475V320L235 270L330 345V475Z" fill="#dddddd"/><path d="M175 475V320L235 270L300 320M175 475H330" fill="none" stroke="#737373" stroke-width="12" stroke-linejoin="round"/>
 <path d="M345 395L392 432L345 472Z" fill="#3dba7a"/>
 <path d="M340 100L550 300L425 435L215 235Z" fill="#e8935a" fill-opacity="0.92" stroke="#f3c4a0" stroke-width="8" stroke-linejoin="round"/>
 <path d="M262 240L410 232L418 385Z" fill="#f3c7a8"/>
 <path d="M345 300L435 220L425 392Z" fill="#6aa862"/>
 <path d="M345 300Q380 250 432 222" fill="none" stroke="#dff3d0" stroke-width="12"/>
 <!-- midplane -->
 <path d="M745 205L865 90H975L855 205Z" fill="#f4f4f4"/><path d="M745 205H858V490H745Z" fill="#dcdcdc"/>
 <path d="M745 490V205L865 90H970M745 490H855" fill="none" stroke="#737373" stroke-width="13" stroke-linejoin="round"/>
 <path d="M860 205L980 95V385L860 490Z" fill="#50c57d" stroke="#d8f5e2" stroke-width="8" stroke-linejoin="round"/>
 <path d="M1025 200L1140 95V385L1025 490Z" fill="#e8955c" stroke="#f7d5bc" stroke-width="8" stroke-linejoin="round"/>
</g>
<!-- Z7 origin 1090,95 -->
<g transform="translate(1090,95) scale(0.09395)">
 <path d="M295 190V320M655 190V320M330 245H620" fill="none" stroke="#6a6a6a" stroke-width="12"/>
 <path d="M308 245L355 218V272ZM642 245L595 218V272Z" fill="#6a6a6a"/>
 <rect x="290" y="320" width="370" height="80" fill="#fba900"/>
 <path d="M320 332v18M355 332v12M390 332v18M425 332v12M460 332v18M495 332v12M530 332v18M565 332v12M600 332v18M635 332v12" stroke="#8a5a00" stroke-width="9" fill="none"/>
 <!-- insert derive -->
 <path d="M1225 215L1320 115H1560L1480 215Z" fill="#f7f7f7"/><path d="M1480 215L1560 115V385L1480 465Z" fill="#cdcdcd"/><path d="M1225 215H1480V465H1225Z" fill="#ebebeb"/>
 <path d="M1225 215L1320 115H1560V385L1480 465H1225Z" fill="none" stroke="#555" stroke-width="13" stroke-linejoin="round"/>
 <path d="M1178 378Q1195 300 1285 300V262L1382 332L1285 408V362Q1225 355 1178 378Z" fill="#3a3d43"/>
</g>
<!-- Z8 origin 1240,95 -->
<g transform="translate(1240,95) scale(0.09395)">
 <rect x="150" y="100" width="380" height="375" fill="#7cc2f6"/>
 <path d="M150 352Q215 250 262 255Q305 260 390 388Q430 335 460 342Q490 350 530 425V475H150Z" fill="#3f93d7"/>
 <circle cx="422" cy="200" r="44" fill="#fff"/><circle cx="422" cy="200" r="34" fill="#fff6b8"/>
 <rect x="940" y="45" width="505" height="503" fill="#0b93dc"/>
 <rect x="985" y="82" width="370" height="283" fill="none" stroke="#14a39a" stroke-width="9" stroke-dasharray="34 14"/>
 <path d="M1265 288V442L1302 410L1336 490L1362 478L1328 400H1388Z" fill="#fff" stroke="#2a2a2a" stroke-width="9" stroke-linejoin="round"/>
</g>
</svg>

</div>
<div id="tbshadow"></div>

<div id="browserhdr" style="top:180px"><svg class="abs" style="left:6px;top:10.500px" width="14" height="9" viewBox="0 0 14 9"><path d="M6.500 0.600V8.200L0.500 4.400zM12.800 0.600V8.200L6.800 4.400z" fill="#333"/></svg><svg class="abs" style="left:346px;top:8px" width="30" height="14" viewBox="0 0 30 14"><circle cx="7" cy="7" r="5.600" fill="#1e1e1e"/><rect x="3.800" y="6.200" width="6.400" height="1.700" fill="#f0f0f0"/><path d="M22.500 1V13" stroke="#555" stroke-width="1.200"/><path d="M24.800 3.500V10.500" stroke="#999" stroke-width="1"/></svg></div>
<div class="abs" style="left:6.100px;top:217.600px;width:7.400px;height:680px;background:#c9c9cb;border-radius:0 0 3.700px 3.700px"></div><div class="abs" style="left:6.100px;top:602.400px;width:7.400px;height:294.600px;background:#9f9f9f;border-radius:3.700px"></div>
<div class="row" style="left:113.5px;top:217.3px;width:169.0px"><svg class="abs" style="left:0;top:0" width="70" height="25" viewBox="0 0 70 25"><use href="#iEyeOff" x="2.500" y="5"/><use href="#iBody" x="34.6" y="2.8"/></svg></div><div class="lb" style="left:185.60px;top:221.07px;font-size:13.95px;line-height:18px;color:#3e3e3e;transform:scaleX(0.9650);">Right Tristock</div>
<div class="row" style="left:113.5px;top:247.3px;width:162.9px"><svg class="abs" style="left:0;top:0" width="70" height="25" viewBox="0 0 70 25"><use href="#iEyeOff" x="2.500" y="5"/><use href="#iBody" x="34.6" y="2.8"/></svg></div><div class="lb" style="left:185.60px;top:251.07px;font-size:13.95px;line-height:18px;color:#3e3e3e;transform:scaleX(0.9650);">Left Wing Tip</div>
<div class="row" style="left:113.5px;top:277.3px;width:167.9px"><svg class="abs" style="left:0;top:0" width="70" height="25" viewBox="0 0 70 25"><use href="#iEyeOff" x="2.500" y="5"/><use href="#iBody" x="34.6" y="2.8"/></svg></div><div class="lb" style="left:185.60px;top:281.07px;font-size:13.95px;line-height:18px;color:#3e3e3e;transform:scaleX(0.9650);">Right Wing Tip</div>
<div class="row" style="left:113.5px;top:307.3px;width:138.2px"><svg class="abs" style="left:0;top:0" width="70" height="25" viewBox="0 0 70 25"><use href="#iEyeOff" x="2.500" y="5"/><use href="#iBody" x="34.6" y="2.8"/></svg></div><div class="lb" style="left:185.60px;top:311.07px;font-size:13.95px;line-height:18px;color:#3e3e3e;transform:scaleX(0.9650);">Left Flap</div>
<div class="row" style="left:113.5px;top:337.3px;width:153.1px"><svg class="abs" style="left:0;top:0" width="70" height="25" viewBox="0 0 70 25"><use href="#iEyeOff" x="2.500" y="5"/><use href="#iBody" x="34.6" y="2.8"/></svg></div><div class="lb" style="left:185.60px;top:341.07px;font-size:13.95px;line-height:18px;color:#3e3e3e;transform:scaleX(0.9650);">Left Aileron</div>
<div class="row" style="left:113.5px;top:367.3px;width:143.5px"><svg class="abs" style="left:0;top:0" width="70" height="25" viewBox="0 0 70 25"><use href="#iEyeOff" x="2.500" y="5"/><use href="#iBody" x="34.6" y="2.8"/></svg></div><div class="lb" style="left:185.60px;top:371.07px;font-size:13.95px;line-height:18px;color:#3e3e3e;transform:scaleX(0.9650);">Right Flap</div>
<div class="row" style="left:113.5px;top:397.3px;width:163.2px"><svg class="abs" style="left:0;top:0" width="70" height="25" viewBox="0 0 70 25"><use href="#iEyeOff" x="2.500" y="5"/><use href="#iBody" x="34.6" y="2.8"/></svg></div><div class="lb" style="left:185.60px;top:401.07px;font-size:13.95px;line-height:18px;color:#3e3e3e;transform:scaleX(0.9650);">Right Aileron</div>
<div class="row" style="left:91.0px;top:427.3px;width:203.4px"><svg class="abs" style="left:0;top:0" width="70" height="25" viewBox="0 0 70 25"><use href="#iExp" x="-24.300" y="3.800"/><use href="#iEye" x="2.500" y="5"/><use href="#iFolder" x="35.1" y="5.0"/></svg></div><div class="lb" style="left:163.10px;top:431.07px;font-size:13.95px;line-height:18px;color:#3e3e3e;transform:scaleX(0.9650);">Horizontal Stab (16)</div>
<div class="row" style="left:91.0px;top:457.3px;width:163.4px"><svg class="abs" style="left:0;top:0" width="70" height="25" viewBox="0 0 70 25"><use href="#iExp" x="-24.300" y="3.800"/><use href="#iEye" x="2.500" y="5"/><use href="#iFolder" x="35.1" y="5.0"/></svg></div><div class="lb" style="left:163.10px;top:461.07px;font-size:13.95px;line-height:18px;color:#3e3e3e;transform:scaleX(0.9650);">Elevator (18)</div>
<div class="row" style="left:91.0px;top:487.3px;width:183.5px"><svg class="abs" style="left:0;top:0" width="70" height="25" viewBox="0 0 70 25"><use href="#iExp" x="-24.300" y="3.800"/><use href="#iEye" x="2.500" y="5"/><use href="#iFolder" x="35.1" y="5.0"/></svg></div><div class="lb" style="left:164.14px;top:491.07px;font-size:13.95px;line-height:18px;color:#3e3e3e;transform:scaleX(0.9650);">Vertical Stab (7)</div>
<div class="row" style="left:91.0px;top:517.3px;width:128.5px"><svg class="abs" style="left:0;top:0" width="70" height="25" viewBox="0 0 70 25"><use href="#iEye" x="2.500" y="5"/><use href="#iFolder" x="35.1" y="5.0"/></svg></div><div class="lb" style="left:163.10px;top:521.07px;font-size:13.95px;line-height:18px;color:#3e3e3e;transform:scaleX(0.9650);">Rudder</div>
<div class="row" style="left:91.0px;top:547.3px;width:113.4px"><svg class="abs" style="left:0;top:0" width="70" height="25" viewBox="0 0 70 25"><use href="#iEye" x="2.500" y="5"/><use href="#iFolder" x="35.1" y="5.0"/></svg></div><div class="lb" style="left:163.10px;top:551.07px;font-size:13.95px;line-height:18px;color:#3e3e3e;transform:scaleX(0.9650);">Fuse</div>
<div class="row" style="left:91.0px;top:577.3px;width:118.3px"><svg class="abs" style="left:0;top:0" width="70" height="25" viewBox="0 0 70 25"><use href="#iEye" x="2.500" y="5"/><use href="#iFolder" x="35.1" y="5.0"/></svg></div><div class="lb" style="left:164.14px;top:581.07px;font-size:13.95px;line-height:18px;color:#3e3e3e;transform:scaleX(0.9650);">Wing</div>
<div class="row" style="left:91.0px;top:607.3px;width:133.4px"><svg class="abs" style="left:0;top:0" width="70" height="25" viewBox="0 0 70 25"><use href="#iEye" x="2.500" y="5"/><use href="#iBody" x="34.6" y="2.8"/></svg></div><div class="lb" style="left:163.10px;top:611.07px;font-size:13.95px;line-height:18px;color:#3e3e3e;transform:scaleX(0.9650);">Body66</div>
<div class="row" style="left:91.0px;top:637.3px;width:133.0px"><svg class="abs" style="left:0;top:0" width="70" height="25" viewBox="0 0 70 25"><use href="#iEye" x="2.500" y="5"/><use href="#iBody" x="34.6" y="2.8"/></svg></div><div class="lb" style="left:163.10px;top:641.07px;font-size:13.95px;line-height:18px;color:#3e3e3e;transform:scaleX(0.9650);">Body67</div>
<div class="row" style="left:91.0px;top:667.3px;width:133.4px"><svg class="abs" style="left:0;top:0" width="70" height="25" viewBox="0 0 70 25"><use href="#iEye" x="2.500" y="5"/><use href="#iBody" x="34.6" y="2.8"/></svg></div><div class="lb" style="left:163.10px;top:671.07px;font-size:13.95px;line-height:18px;color:#3e3e3e;transform:scaleX(0.9650);">Body68</div>
<div class="row" style="left:91.0px;top:697.3px;width:133.4px"><svg class="abs" style="left:0;top:0" width="70" height="25" viewBox="0 0 70 25"><use href="#iEye" x="2.500" y="5"/><use href="#iBody" x="34.6" y="2.8"/></svg></div><div class="lb" style="left:163.10px;top:701.07px;font-size:13.95px;line-height:18px;color:#3e3e3e;transform:scaleX(0.9650);">Body69</div>
<div class="row" style="left:91.0px;top:727.3px;width:133.3px"><svg class="abs" style="left:0;top:0" width="70" height="25" viewBox="0 0 70 25"><use href="#iEye" x="2.500" y="5"/><use href="#iBody" x="34.6" y="2.8"/></svg></div><div class="lb" style="left:163.10px;top:731.07px;font-size:13.95px;line-height:18px;color:#3e3e3e;transform:scaleX(0.9650);">Body70</div>
<div class="row" style="left:91.0px;top:757.3px;width:128.8px"><svg class="abs" style="left:0;top:0" width="70" height="25" viewBox="0 0 70 25"><use href="#iEye" x="2.500" y="5"/><use href="#iBody" x="34.6" y="2.8"/></svg></div><div class="lb" style="left:163.10px;top:761.07px;font-size:13.95px;line-height:18px;color:#3e3e3e;transform:scaleX(0.9650);">Body71</div>
<div class="row" style="left:91.0px;top:787.3px;width:133.3px"><svg class="abs" style="left:0;top:0" width="70" height="25" viewBox="0 0 70 25"><use href="#iEye" x="2.500" y="5"/><use href="#iBody" x="34.6" y="2.8"/></svg></div><div class="lb" style="left:163.10px;top:791.07px;font-size:13.95px;line-height:18px;color:#3e3e3e;transform:scaleX(0.9650);">Body72</div>
<div class="row" style="left:68.5px;top:817.3px;width:148.3px"><svg class="abs" style="left:0;top:0" width="70" height="25" viewBox="0 0 70 25"><use href="#iExp" x="-24.300" y="3.800"/><use href="#iEyeOff" x="2.500" y="5"/><use href="#iFolder" x="35.1" y="5.0"/></svg></div><div class="lb" style="left:141.02px;top:821.07px;font-size:13.95px;line-height:18px;color:#3e3e3e;transform:scaleX(0.9650);">Canvases</div>
<div class="row" style="left:68.5px;top:847.3px;width:143.1px"><svg class="abs" style="left:0;top:0" width="70" height="25" viewBox="0 0 70 25"><use href="#iExp" x="-24.300" y="3.800"/><use href="#iEye" x="2.500" y="5"/><use href="#iFolder" x="35.1" y="5.0"/></svg></div><div class="lb" style="left:141.09px;top:851.07px;font-size:13.95px;line-height:18px;color:#3e3e3e;transform:scaleX(0.9650);">Sketches</div>
<div class="row" style="left:68.5px;top:877.3px;width:163.4px"><svg class="abs" style="left:0;top:0" width="70" height="25" viewBox="0 0 70 25"><use href="#iExp" x="-24.300" y="3.800"/><use href="#iEye" x="2.500" y="5"/><use href="#iFolder" x="35.1" y="5.0"/></svg></div><div class="lb" style="left:141.02px;top:881.07px;font-size:13.95px;line-height:18px;color:#3e3e3e;transform:scaleX(0.9650);">Construction</div>
<div id="comments" style="top:926px"><svg class="abs" style="left:346px;top:8px" width="30" height="14" viewBox="0 0 30 14"><circle cx="7" cy="7" r="5.600" fill="#1e1e1e"/><rect x="3.800" y="6.200" width="6.400" height="1.700" fill="#f0f0f0"/><rect x="6.150" y="3.800" width="1.700" height="6.400" fill="#f0f0f0"/><path d="M22.500 1V13" stroke="#555" stroke-width="1.200"/><path d="M24.800 3.500V10.500" stroke="#999" stroke-width="1"/></svg></div>

<div class="abs" style="left:0;top:963.200px;width:1916px;height:67px;background:#f0f0f0"></div>
<div class="abs" style="left:0;top:1030px;width:1916px;height:3px;background:#1c1c1c"></div>
<div class="abs" style="left:442px;top:963.600px;width:1466.700px;height:8px;background:#d0d0d0;border-radius:0 0 5px 5px"></div>
<svg class="abs" style="left:0;top:963px" width="1916" height="67" viewBox="0 963 1916 67"><g fill="#484848"><path d="M9.500 990h2.600v18h-2.600zM25 990v18l-12.500-9z"/><path d="M40.500 999l11.500-8.500v17zM53 994.500h3v9h-3z"/><path d="M72 989l15.500 10-15.500 10z"/><path d="M117.500 999l-11.500-8.500v17zM102 994.500h3v9h-3z"/><path d="M147.500 990h2.600v18h-2.600zM135 990v18l12.500-9z"/></g><path d="M167 1014h1.500M173.300 1014h5.100M181 1014H1839.800" stroke="#c8c8c8" stroke-width="2.600" fill="none"/><use href="#tE" x="177.0" y="983"/><use href="#tS" x="207.0" y="983"/><use href="#tE" x="237.0" y="983"/><use href="#tM" x="266.9" y="983"/><use href="#tS" x="296.9" y="983"/><use href="#tE" x="326.9" y="983"/><use href="#tE" x="356.9" y="983"/><use href="#tM" x="386.9" y="983"/><use href="#tS" x="416.8" y="983"/><use href="#tE" x="446.8" y="983"/><use href="#tE" x="476.8" y="983"/><use href="#tS" x="506.8" y="983"/><use href="#tE" x="536.8" y="983"/><use href="#tE" x="566.7" y="983"/><use href="#tM" x="596.7" y="983"/><use href="#tM" x="626.7" y="983"/><use href="#tP" x="656.7" y="983"/><use href="#tS" x="686.7" y="983"/><use href="#tE" x="716.6" y="983"/><use href="#tS" x="746.6" y="983"/><use href="#tE" x="776.6" y="983"/><use href="#tM" x="806.6" y="983"/><use href="#tP" x="836.6" y="983"/><use href="#tS" x="866.5" y="983"/><use href="#tS" x="896.5" y="983"/><use href="#tH" x="926.5" y="983"/><use href="#tH" x="956.5" y="983"/><use href="#tM" x="986.5" y="983"/><use href="#tS" x="1016.4" y="983"/><use href="#tE" x="1046.4" y="983"/><use href="#tM" x="1076.4" y="983"/><use href="#tF" x="1106.4" y="983"/><use href="#tS" x="1136.4" y="983"/><use href="#tE" x="1166.3" y="983"/><use href="#tE" x="1196.3" y="983"/><use href="#tM" x="1226.3" y="983"/><use href="#tM" x="1256.3" y="983"/><use href="#tM" x="1286.3" y="983"/><use href="#tS" x="1316.2" y="983"/><use href="#tE" x="1346.2" y="983"/><use href="#tS" x="1376.2" y="983"/><use href="#tE" x="1406.2" y="983"/><use href="#tE" x="1436.2" y="983"/><use href="#tM" x="1466.1" y="983"/><use href="#tM" x="1496.1" y="983"/><use href="#tS" x="1526.1" y="983"/><use href="#tE" x="1556.1" y="983"/><use href="#tS" x="1586.1" y="983"/><use href="#tE" x="1616.0" y="983"/><use href="#tE" x="1646.0" y="983"/><use href="#tE" x="1676.0" y="983"/><use href="#tS" x="1706.0" y="983"/><use href="#tE" x="1736.0" y="983"/><use href="#tE" x="1765.9" y="983"/><use href="#tS" x="1795.9" y="983"/><use href="#tE" x="1825.9" y="983"/><path d="M189.5 1007v7M219.5 1007v7M249.5 1007v7M279.4 1007v7M309.4 1007v7M339.4 1007v7M369.4 1007v7M399.4 1007v7M429.3 1007v7M459.3 1007v7M489.3 1007v7M519.3 1007v7M549.3 1007v7M579.2 1007v7M609.2 1007v7M639.2 1007v7M669.2 1007v7M699.2 1007v7M729.1 1007v7M759.1 1007v7M789.1 1007v7M819.1 1007v7M849.1 1007v7M879.0 1007v7M909.0 1007v7M939.0 1007v7M969.0 1007v7M999.0 1007v7M1028.9 1007v7M1058.9 1007v7M1088.9 1007v7M1118.9 1007v7M1148.9 1007v7M1178.8 1007v7M1208.8 1007v7M1238.8 1007v7M1268.8 1007v7M1298.8 1007v7M1328.7 1007v7M1358.7 1007v7M1388.7 1007v7M1418.7 1007v7M1448.7 1007v7M1478.6 1007v7M1508.6 1007v7M1538.6 1007v7M1568.6 1007v7M1598.6 1007v7M1628.5 1007v7M1658.5 1007v7M1688.5 1007v7M1718.5 1007v7M1748.5 1007v7M1778.4 1007v7M1808.4 1007v7M1838.4 1007v7" stroke="#c8c8c8" stroke-width="2" fill="none"/><path d="M1846.300 976.100h13.400v5.800l-4.800 4.600h-3.800l-4.800-4.600z" fill="#636363"/><path d="M1853.500 985V1015.800" stroke="#636363" stroke-width="2.800"/><use href="#iGear" x="1879.800" y="989.300"/></svg>

<div class="abs" style="left:807px;top:928px;width:296px;height:29.500px;background:#f0f0f0"></div>
<svg class="abs" style="left:0;top:900px" width="1916" height="70" viewBox="0 900 1916 70">
<g transform="translate(800,922) scale(0.083507)">
 <!-- orbit -->
 <path d="M262 158l9 20 20 9-20 9-9 20-9-20-20-9 20-9zM236 215l8 17 17 8-17 8-8 17-8-17-17-8 17-8z" fill="#3d8fd6"/>
 <ellipse cx="238" cy="250" rx="42" ry="112" fill="none" stroke="#444" stroke-width="11"/>
 <path d="M160 205Q110 245 160 280M305 195Q400 240 330 275Q290 292 225 292" fill="none" stroke="#444" stroke-width="11"/>
 <path d="M320 195l-12 40 -22-22z" fill="#444"/>
 <path d="M445 228H525L485 276Z" fill="#2a2a2a"/>
 <!-- look at -->
 <path d="M640 215L700 148L722 190L800 150L810 215" fill="#ddd" stroke="#444" stroke-width="11" stroke-linejoin="round"/>
 <rect x="630" y="215" width="225" height="145" fill="#f4f4f4" stroke="#444" stroke-width="12"/>
 <rect x="676" y="256" width="134" height="64" fill="#a9a9b8" stroke="#444" stroke-width="10"/>
 <!-- hand -->
 <path d="M1080 270V190Q1080 165 1098 165Q1112 165 1112 190V150Q1112 128 1130 128Q1148 128 1148 150V160Q1150 140 1166 140Q1184 140 1184 165V185Q1188 165 1204 168Q1220 172 1218 195Q1260 190 1240 250Q1225 300 1200 330L1195 362H1095Q1085 330 1050 295L1020 250Q1030 228 1052 240Z" fill="#fff" stroke="#444" stroke-width="11" stroke-linejoin="round"/>
 <path d="M1112 190V240M1148 160V240M1184 185V240" stroke="#444" stroke-width="10" fill="none"/>
 <!-- zoom -->
 <circle cx="1470" cy="225" r="62" fill="#dfeeee" stroke="#444" stroke-width="13"/>
 <path d="M1515 272L1580 338" stroke="#444" stroke-width="26" stroke-linecap="round"/>
 <path d="M1575 170H1635M1605 140V200M1575 232H1635" stroke="#333" stroke-width="10" fill="none"/>
</g>
<g transform="translate(940,922) scale(0.088731)">
 <!-- zoom window -->
 <path d="M110 125H325V340H110Z" fill="none" stroke="#444" stroke-width="11" stroke-dasharray="30 22"/>
 <circle cx="200" cy="220" r="88" fill="#dcefee" stroke="#444" stroke-width="15"/>
 <path d="M265 285L312 330" stroke="#444" stroke-width="30" stroke-linecap="round"/>
 <path d="M405 205H485L445 252Z" fill="#2a2a2a"/>
 <!-- display -->
 <rect x="575" y="125" width="215" height="175" rx="8" fill="#e6e6e6" stroke="#555" stroke-width="11"/>
 <rect x="606" y="160" width="154" height="106" fill="#8db3e6" stroke="#34568c" stroke-width="10"/>
 <path d="M652 302L640 340H730L718 302Z" fill="#f2f2f2" stroke="#555" stroke-width="9" stroke-linejoin="round"/>
 <path d="M825 205H905L865 252Z" fill="#2a2a2a"/>
 <!-- grid -->
 <rect x="1010" y="125" width="215" height="220" rx="6" fill="#fff" stroke="#555" stroke-width="10"/>
 <path d="M1053 125V345M1096 125V345M1139 125V345M1182 125V345M1010 169H1225M1010 213H1225M1010 257H1225M1010 301H1225" stroke="#6a6a6a" stroke-width="21" fill="none"/>
 <path d="M1260 205H1340L1300 252Z" fill="#2a2a2a"/>
 <!-- viewports -->
 <rect x="1440" y="140" width="210" height="175" rx="10" fill="#4468a4"/>
 <g fill="#7aa3dc"><rect x="1455" y="155" width="82" height="66"/><rect x="1553" y="155" width="82" height="66"/><rect x="1455" y="235" width="82" height="66"/><rect x="1553" y="235" width="82" height="66"/></g>
 <path d="M1700 205H1780L1740 252Z" fill="#2a2a2a"/>
</g>
</svg>
<!-- view cube -->
<svg class="abs" style="left:1780px;top:180px" width="136" height="120" viewBox="0 0 136 120">
<defs><radialGradient id="vcsh" cx="0.5" cy="0.5" r="0.5"><stop offset="0" stop-color="#9a9a9a" stop-opacity="0.550"/><stop offset="1" stop-color="#9a9a9a" stop-opacity="0"/></radialGradient>
<linearGradient id="vcf" x1="0" x2="0" y1="0" y2="1"><stop offset="0" stop-color="#f0f0f0"/><stop offset="1" stop-color="#e2e2e3"/></linearGradient></defs>
<ellipse cx="64" cy="99" rx="46" ry="7" fill="url(#vcsh)"/>
<rect x="35.500" y="37" width="59" height="59" fill="#c4c4c4"/>
<rect x="36.500" y="38.500" width="57" height="56" fill="url(#vcf)"/>
<rect x="44.500" y="46" width="39" height="39" fill="#e1e2e3" opacity="0.800"/>
<text x="64.500" y="72.300" text-anchor="middle" font-family="Liberation Sans,sans-serif" font-weight="bold" font-size="16.500" fill="#a2a3a8" textLength="37" lengthAdjust="spacingAndGlyphs">RIGHT</text>
<text x="36.300" y="33.600" font-family="Liberation Sans,sans-serif" font-weight="bold" font-size="16" fill="#9a9af2" textLength="8.500" lengthAdjust="spacingAndGlyphs">Z</text>
<text x="28.300" y="104.500" font-family="Liberation Sans,sans-serif" font-weight="bold" font-size="16" fill="#f08a92" textLength="8" lengthAdjust="spacingAndGlyphs">X</text>
<text x="99.800" y="96" font-family="Liberation Sans,sans-serif" font-weight="bold" font-size="15" fill="#a4eeb0" textLength="7" lengthAdjust="spacingAndGlyphs">Y</text>
</svg>

<div class="abs" style="left:1913px;top:29px;width:3px;height:147px;background:#f6f6f6"></div>

<div id="labels">
<div class="lb" style="left:23.57px;top:4.66px;font-size:15.41px;line-height:20px;color:#000;transform:scaleX(0.9387);">Autodesk Fusion 360 (Education License)</div>
<div class="lb" style="left:874.83px;top:41.81px;font-size:15.55px;line-height:20px;color:#555;transform:scaleX(0.9695);">60&quot; Fusion Stick v18*</div>
<div class="lb" style="left:280.84px;top:73.31px;font-size:14.39px;line-height:19px;color:#4a4a4a;transform:scaleX(0.8565);">SURFACE</div>
<div class="lb" style="left:396.79px;top:73.31px;font-size:14.39px;line-height:19px;color:#4a4a4a;transform:scaleX(0.8541);">MESH</div>
<div class="lb" style="left:488.14px;top:73.31px;font-size:14.39px;line-height:19px;color:#4a4a4a;transform:scaleX(0.8511);">SHEET METAL</div>
<div class="lb" style="left:629.25px;top:73.31px;font-size:14.39px;line-height:19px;color:#4a4a4a;transform:scaleX(0.8859);">PLASTIC</div>
<div class="lb" style="left:739.28px;top:73.31px;font-size:14.39px;line-height:19px;color:#4a4a4a;transform:scaleX(0.8273);">UTILITIES</div>
<div class="lb" style="left:183.53px;top:73.31px;font-size:14.39px;line-height:19px;color:#1f90d0;transform:scaleX(0.8795);">SOLID</div>
<div class="lb" style="left:289.49px;top:150.31px;font-size:14.10px;line-height:18px;color:#3f3f3f;transform:scaleX(0.8574);">CREATE</div>
<svg class="abs" style="left:342.0px;top:155.6px" width="8" height="5" viewBox="0 0 8 5"><path d="M0 0H7L3.500 4.300Z" fill="#222"/></svg>
<div class="lb" style="left:507.58px;top:150.31px;font-size:14.10px;line-height:18px;color:#3f3f3f;transform:scaleX(0.8894);">AUTOMATE</div>
<svg class="abs" style="left:581.4px;top:155.6px" width="8" height="5" viewBox="0 0 8 5"><path d="M0 0H7L3.500 4.300Z" fill="#222"/></svg>
<div class="lb" style="left:687.87px;top:150.31px;font-size:14.10px;line-height:18px;color:#3f3f3f;transform:scaleX(0.8883);">MODIFY</div>
<svg class="abs" style="left:741.0px;top:155.6px" width="8" height="5" viewBox="0 0 8 5"><path d="M0 0H7L3.500 4.300Z" fill="#222"/></svg>
<div class="lb" style="left:855.28px;top:150.31px;font-size:14.10px;line-height:18px;color:#3f3f3f;transform:scaleX(0.9008);">ASSEMBLE</div>
<svg class="abs" style="left:927.8px;top:155.6px" width="8" height="5" viewBox="0 0 8 5"><path d="M0 0H7L3.500 4.300Z" fill="#222"/></svg>
<div class="lb" style="left:973.37px;top:150.31px;font-size:14.10px;line-height:18px;color:#3f3f3f;transform:scaleX(0.8792);">CONSTRUCT</div>
<svg class="abs" style="left:1054.9px;top:155.6px" width="8" height="5" viewBox="0 0 8 5"><path d="M0 0H7L3.500 4.300Z" fill="#222"/></svg>
<div class="lb" style="left:1101.19px;top:150.31px;font-size:14.10px;line-height:18px;color:#3f3f3f;transform:scaleX(0.8557);">INSPECT</div>
<svg class="abs" style="left:1157.4px;top:155.6px" width="8" height="5" viewBox="0 0 8 5"><path d="M0 0H7L3.500 4.300Z" fill="#222"/></svg>
<div class="lb" style="left:1215.47px;top:150.31px;font-size:14.10px;line-height:18px;color:#3f3f3f;transform:scaleX(0.8647);">INSERT</div>
<svg class="abs" style="left:1263.9px;top:155.6px" width="8" height="5" viewBox="0 0 8 5"><path d="M0 0H7L3.500 4.300Z" fill="#222"/></svg>
<div class="lb" style="left:1321.84px;top:150.31px;font-size:14.10px;line-height:18px;color:#3f3f3f;transform:scaleX(0.8741);">SELECT</div>
<svg class="abs" style="left:1373.5px;top:155.6px" width="8" height="5" viewBox="0 0 8 5"><path d="M0 0H7L3.500 4.300Z" fill="#222"/></svg>
<div class="lb" style="left:48.45px;top:111.41px;font-size:14.10px;line-height:18px;color:#3a3a3a;transform:scaleX(0.8991);font-weight:bold;">DESIGN</div>
<svg class="abs" style="left:102px;top:117px" width="8" height="5" viewBox="0 0 8 5"><path d="M0 0H7.400L3.700 4.500Z" fill="#222"/></svg>
<div class="lb" style="left:31.85px;top:186.12px;font-size:13.81px;line-height:18px;color:#666;transform:scaleX(0.9242);">BROWSER</div>
<div class="lb" style="left:32.28px;top:932.32px;font-size:13.81px;line-height:18px;color:#666;transform:scaleX(0.8913);">COMMENTS</div>
</div>
</body></html>
